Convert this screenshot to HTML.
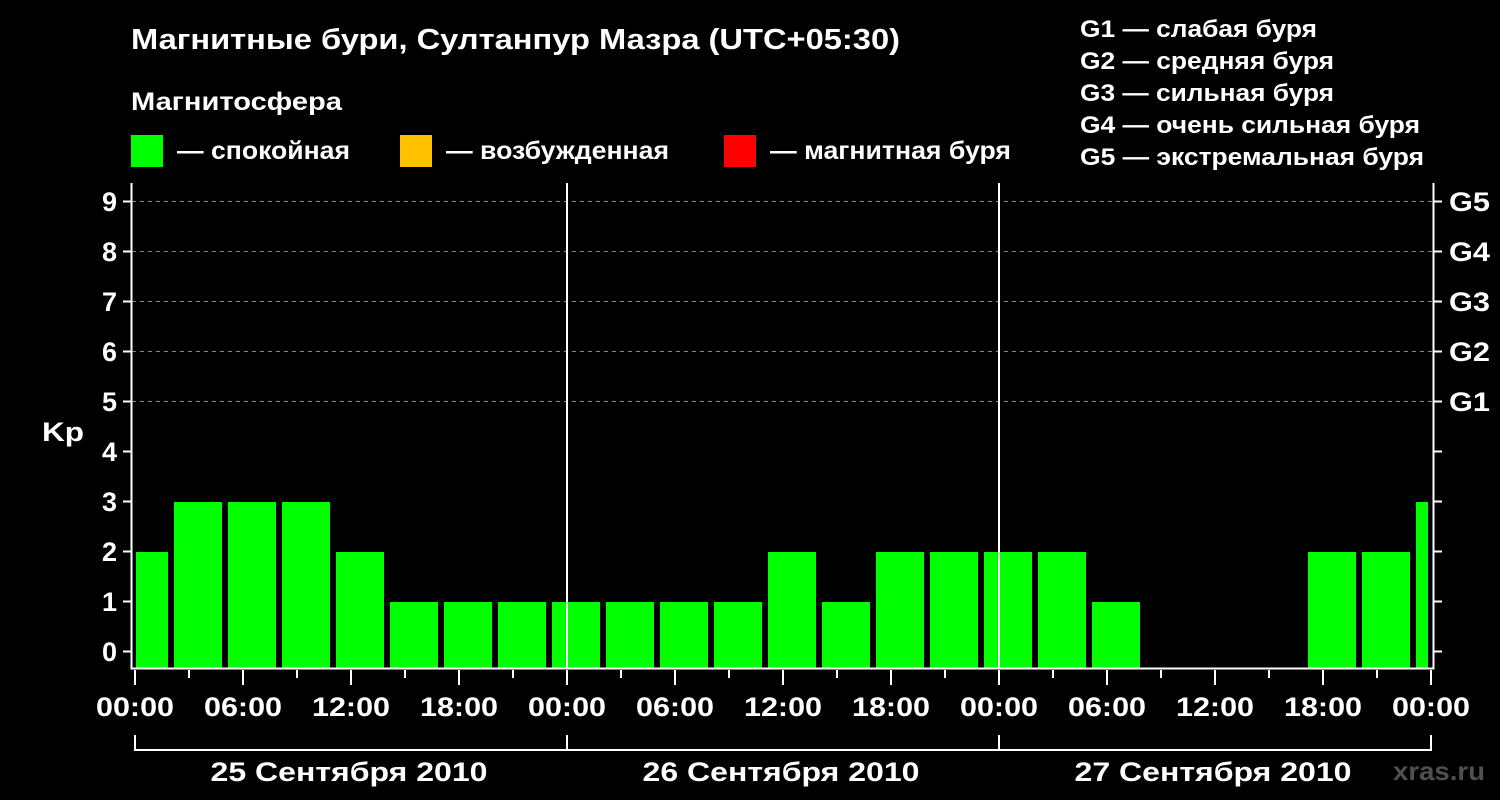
<!DOCTYPE html>
<html><head><meta charset="utf-8"><style>
html,body{margin:0;padding:0;background:#000;width:1500px;height:800px;overflow:hidden}
svg text{font-family:"Liberation Sans",sans-serif;font-weight:bold;fill:#fff}
</style></head><body>
<svg width="1500" height="800" xmlns="http://www.w3.org/2000/svg">
<text x="131" y="49" font-size="29" textLength="769" lengthAdjust="spacingAndGlyphs">Магнитные бури, Султанпур Мазра (UTC+05:30)</text>
<text x="131" y="110" font-size="25" textLength="211" lengthAdjust="spacingAndGlyphs">Магнитосфера</text>
<rect x="131" y="135" width="32" height="32" fill="#00ff00"/>
<text x="177" y="159" font-size="25" textLength="173" lengthAdjust="spacingAndGlyphs">— спокойная</text>
<rect x="400" y="135" width="32" height="32" fill="#ffc000"/>
<text x="446" y="159" font-size="25" textLength="223" lengthAdjust="spacingAndGlyphs">— возбужденная</text>
<rect x="724" y="135" width="32" height="32" fill="#ff0000"/>
<text x="770" y="159" font-size="25" textLength="241" lengthAdjust="spacingAndGlyphs">— магнитная буря</text>
<g font-size="24">
<text x="1080" y="37" textLength="237" lengthAdjust="spacingAndGlyphs">G1 — слабая буря</text>
<text x="1080" y="69" textLength="254" lengthAdjust="spacingAndGlyphs">G2 — средняя буря</text>
<text x="1080" y="101" textLength="254" lengthAdjust="spacingAndGlyphs">G3 — сильная буря</text>
<text x="1080" y="133" textLength="340" lengthAdjust="spacingAndGlyphs">G4 — очень сильная буря</text>
<text x="1080" y="165" textLength="344" lengthAdjust="spacingAndGlyphs">G5 — экстремальная буря</text>
</g>
<g stroke="#888" stroke-dasharray="4,4" stroke-width="1">
<line x1="132" y1="201.5" x2="1433" y2="201.5"/>
<line x1="132" y1="251.5" x2="1433" y2="251.5"/>
<line x1="132" y1="301.5" x2="1433" y2="301.5"/>
<line x1="132" y1="351.5" x2="1433" y2="351.5"/>
<line x1="132" y1="401.5" x2="1433" y2="401.5"/>
</g>
<g fill="#00ff00">
<rect x="136" y="552" width="32" height="116"/>
<rect x="174" y="502" width="48" height="166"/>
<rect x="228" y="502" width="48" height="166"/>
<rect x="282" y="502" width="48" height="166"/>
<rect x="336" y="552" width="48" height="116"/>
<rect x="390" y="602" width="48" height="66"/>
<rect x="444" y="602" width="48" height="66"/>
<rect x="498" y="602" width="48" height="66"/>
<rect x="552" y="602" width="48" height="66"/>
<rect x="606" y="602" width="48" height="66"/>
<rect x="660" y="602" width="48" height="66"/>
<rect x="714" y="602" width="48" height="66"/>
<rect x="768" y="552" width="48" height="116"/>
<rect x="822" y="602" width="48" height="66"/>
<rect x="876" y="552" width="48" height="116"/>
<rect x="930" y="552" width="48" height="116"/>
<rect x="984" y="552" width="48" height="116"/>
<rect x="1038" y="552" width="48" height="116"/>
<rect x="1092" y="602" width="48" height="66"/>
<rect x="1308" y="552" width="48" height="116"/>
<rect x="1362" y="552" width="48" height="116"/>
<rect x="1416" y="502" width="12" height="166"/>
</g>
<g stroke="#fff" stroke-width="2" fill="none">
<path d="M131.5 183 V668.5 H1433.5 V183"/>
<line x1="567" y1="183" x2="567" y2="668"/>
<line x1="999" y1="183" x2="999" y2="668"/>
<path d="M123 201.5h8M123 251.5h8M123 301.5h8M123 351.5h8M123 401.5h8M123 451.5h8M123 501.5h8M123 551.5h8M123 601.5h8M123 651.5h8"/>
<path d="M1434 201.5h8M1434 251.5h8M1434 301.5h8M1434 351.5h8M1434 401.5h8M1434 451.5h8M1434 501.5h8M1434 551.5h8M1434 601.5h8M1434 651.5h8"/>
<path d="M135 670v15M243 670v15M351 670v15M459 670v15M567 670v15M675 670v15M783 670v15M891 670v15M999 670v15M1107 670v15M1215 670v15M1323 670v15M1431 670v15"/>
<path d="M189 670v8M297 670v8M405 670v8M513 670v8M621 670v8M729 670v8M837 670v8M945 670v8M1053 670v8M1161 670v8M1269 670v8M1377 670v8"/>
<path d="M135 735v15H1431V735M567 735v15M999 735v15"/>
</g>
<g font-size="27" text-anchor="end">
<text x="117" y="211">9</text><text x="117" y="261">8</text><text x="117" y="311">7</text>
<text x="117" y="361">6</text><text x="117" y="411">5</text><text x="117" y="461">4</text>
<text x="117" y="511">3</text><text x="117" y="561">2</text><text x="117" y="611">1</text>
<text x="117" y="661">0</text>
</g>
<text x="42" y="441" font-size="27" textLength="42" lengthAdjust="spacingAndGlyphs">Kp</text>
<g font-size="27">
<text x="1449" y="211" textLength="41" lengthAdjust="spacingAndGlyphs">G5</text><text x="1449" y="261" textLength="41" lengthAdjust="spacingAndGlyphs">G4</text><text x="1449" y="311" textLength="41" lengthAdjust="spacingAndGlyphs">G3</text>
<text x="1449" y="361" textLength="41" lengthAdjust="spacingAndGlyphs">G2</text><text x="1449" y="411" textLength="41" lengthAdjust="spacingAndGlyphs">G1</text>
</g>
<g font-size="27" text-anchor="middle">
<text x="135" y="716" textLength="78" lengthAdjust="spacingAndGlyphs">00:00</text><text x="243" y="716" textLength="78" lengthAdjust="spacingAndGlyphs">06:00</text><text x="351" y="716" textLength="78" lengthAdjust="spacingAndGlyphs">12:00</text>
<text x="459" y="716" textLength="78" lengthAdjust="spacingAndGlyphs">18:00</text><text x="567" y="716" textLength="78" lengthAdjust="spacingAndGlyphs">00:00</text><text x="675" y="716" textLength="78" lengthAdjust="spacingAndGlyphs">06:00</text>
<text x="783" y="716" textLength="78" lengthAdjust="spacingAndGlyphs">12:00</text><text x="891" y="716" textLength="78" lengthAdjust="spacingAndGlyphs">18:00</text><text x="999" y="716" textLength="78" lengthAdjust="spacingAndGlyphs">00:00</text>
<text x="1107" y="716" textLength="78" lengthAdjust="spacingAndGlyphs">06:00</text><text x="1215" y="716" textLength="78" lengthAdjust="spacingAndGlyphs">12:00</text><text x="1323" y="716" textLength="78" lengthAdjust="spacingAndGlyphs">18:00</text>
<text x="1431" y="716" textLength="78" lengthAdjust="spacingAndGlyphs">00:00</text>
<text x="349" y="781" textLength="277" lengthAdjust="spacingAndGlyphs">25 Сентября 2010</text>
<text x="781" y="781" textLength="277" lengthAdjust="spacingAndGlyphs">26 Сентября 2010</text>
<text x="1213" y="781" textLength="277" lengthAdjust="spacingAndGlyphs">27 Сентября 2010</text>
</g>
<text x="1393" y="780" font-size="26" textLength="92" lengthAdjust="spacingAndGlyphs" style="fill:#505050">xras.ru</text>
</svg>
</body></html>
